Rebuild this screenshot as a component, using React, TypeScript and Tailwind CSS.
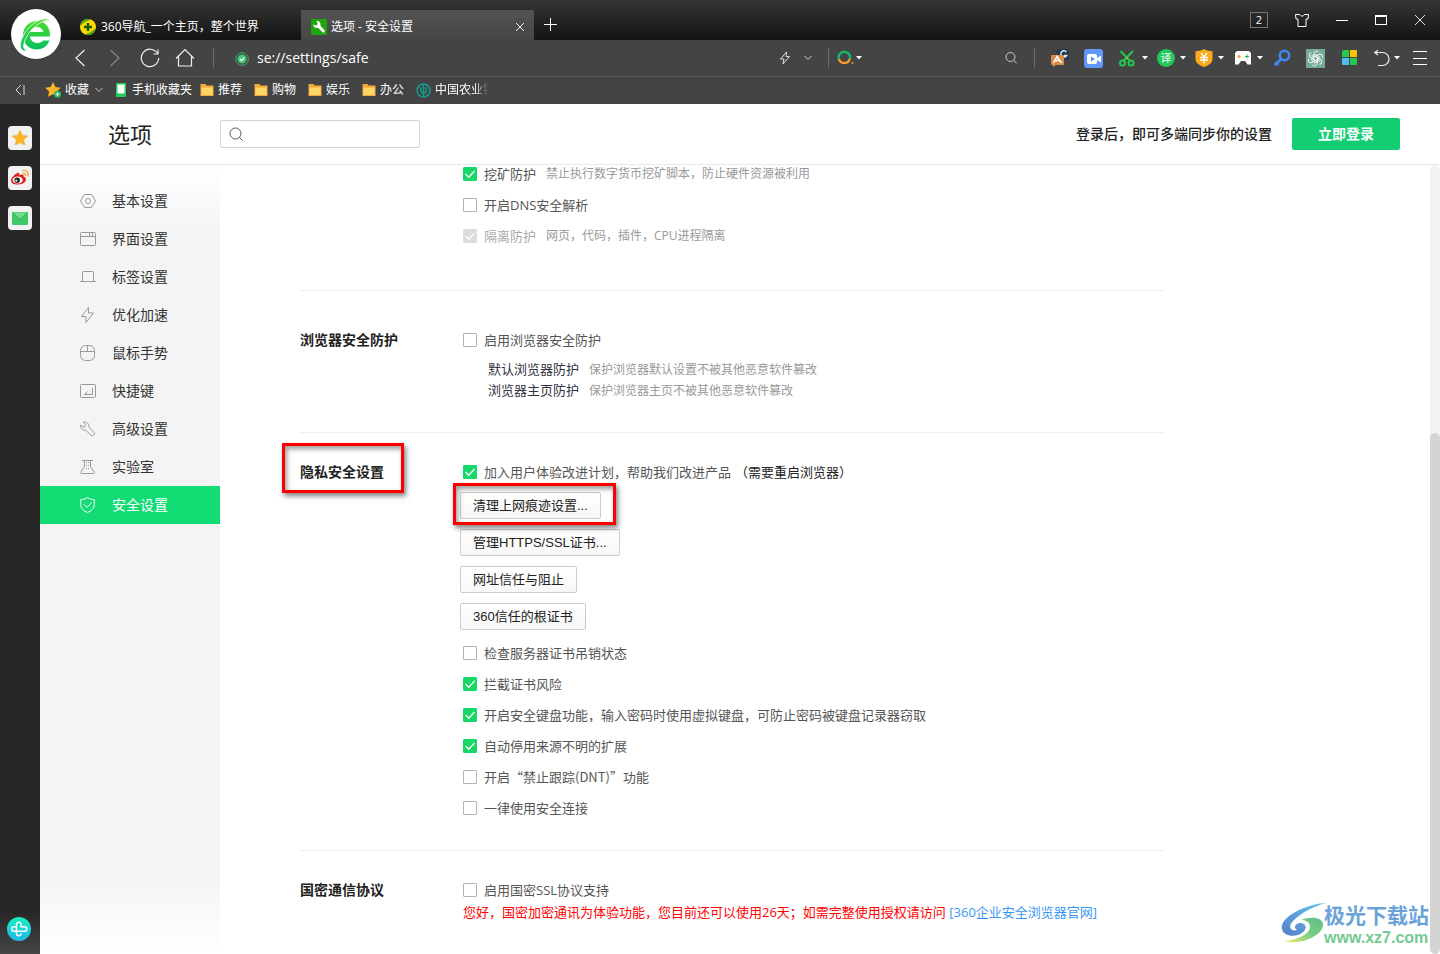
import { useState } from 'react'
import type { ReactNode } from 'react'

const folders = ['推荐', '购物', '娱乐', '办公']

const navItems: { label: string; icon: ReactNode }[] = [
  {
    label: '基本设置',
    icon: (
      <>
        <path d="M4.500 1.500h7l4 6.500-4 6.500h-7L.5 8z" />
        <circle cx="8" cy="8" r="2.500" />
      </>
    ),
  },
  {
    label: '界面设置',
    icon: (
      <>
        <rect x=".5" y="1.500" width="15" height="13" rx="1" />
        <path d="M.5 5.500h15M9.500 2v3M12.500 2v3" />
      </>
    ),
  },
  {
    label: '标签设置',
    icon: <path d="M0 12.500h16M2.500 12.500V3.500a1 1 0 0 1 1-1h9a1 1 0 0 1 1 1v9" />,
  },
  {
    label: '优化加速',
    icon: <path d="M8.500 .5 1.500 9.500h4.500v6l7.500-9.500H8.500z" />,
  },
  {
    label: '鼠标手势',
    icon: (
      <>
        <rect x=".5" y=".5" width="14" height="15" rx="5" />
        <path d="M.5 6.500h14M7.500 .5v6" />
      </>
    ),
  },
  {
    label: '快捷键',
    icon: (
      <>
        <rect x=".5" y="1.500" width="15" height="13" rx="1" />
        <path d="M12.500 5v6.500H4.500l3-3M4.500 11.500h3" />
      </>
    ),
  },
  {
    label: '高级设置',
    icon: (
      <path d="M3.200 1.300 5.600 3.700 5 5.600 3 6.100.8 3.900C.2 6.500 2 9.600 5.600 9.100l5.600 5.300c1.800 1.200 4.200-.9 3-2.800L9 6.300C9.700 3 6.400.2 3.200 1.300z" />
    ),
  },
  {
    label: '实验室',
    icon: (
      <>
        <path d="M2 1.500h11M4.500 1.500v6L.8 13c-.4.800 0 1.500 1 1.500h11.400c1 0 1.400-.7 1-1.500L10.500 7.500v-6" />
        <path d="M6.500 3v7M8.500 3v7" strokeDasharray="1 2" />
      </>
    ),
  },
  {
    label: '安全设置',
    icon: (
      <>
        <path d="M7.500 .6C5.500 2 3.200 2.600.7 2.700v5c0 3.600 2.800 6.300 6.800 7.700 4-1.400 6.800-4.100 6.800-7.700v-5C11.800 2.600 9.500 2 7.500.6z" />
        <path d="m4 7.500 3 3 4.500-5" />
      </>
    ),
  },
]

function Caret() {
  return (
    <svg width="6" height="4" viewBox="0 0 6 4" className="fill-white">
      <path d="M0 0h6L3 3.500z" />
    </svg>
  )
}

function Chevron() {
  return (
    <svg width="8" height="8" viewBox="0 0 8 8" fill="none" stroke="#ccc">
      <path d="m.5 2 3.500 3.500L7.500 2" />
    </svg>
  )
}

function Folder() {
  return (
    <svg width="14" height="14" viewBox="0 0 14 14">
      <path d="M.5 1h5l1 1.500h7v10.500H.5z" fill="#f5a93a" />
      <path d="M1.500 4.500h11V12h-11z" fill="#ffd766" />
    </svg>
  )
}

function TabBar() {
  return (
    <div className="flex h-10 items-end bg-linear-to-b from-[#363637] to-[#141415] pl-[67px]">
      <div className="flex h-[30px] w-[234px] items-center gap-1 pt-[3px] pl-3 text-xs text-white">
        <svg width="18" height="18" viewBox="0 0 18 18">
          <circle cx="9" cy="9" r="8" fill="#ffd900" />
          <path d="M1.200 8A8 8 0 0 1 13 2.100C9 2 5 4 1.200 8zM16.800 10A8 8 0 0 1 5 15.900c4 .1 8-1.900 11.800-5.900z" fill="#3aa815" />
          <path d="M9 5v8M5 9h8" stroke="#175b13" strokeWidth="2.500" />
        </svg>
        <span>360导航_一个主页，整个世界</span>
      </div>
      <div className="flex h-[30px] w-[233px] items-center bg-linear-to-b from-[#535354] to-[#464647] pt-[3px] pr-2 pl-[10px] text-xs text-white">
        <svg width="16" height="16" viewBox="0 0 16 16">
          <rect width="16" height="16" rx="1" fill="#1fa50e" />
          <path d="M8 7.500 12.300 12" stroke="#fff" strokeWidth="3" strokeLinecap="round" />
          <path d="M2.300 5.200 4.300 6.500 6.400 5.800 6.600 3.600 5 2c3-.4 5 1.500 4.500 4.500L7 9C4 9.200 2 7.800 2.300 5.200z" fill="#fff" />
        </svg>
        <span className="ml-1 flex-1">选项 - 安全设置</span>
        <button aria-label="关闭标签">
          <svg width="12" height="12" viewBox="0 0 12 12" stroke="#eee">
            <path d="m2 2 8 8M10 2l-8 8" />
          </svg>
        </button>
      </div>
      <button aria-label="新标签" className="flex h-[30px] w-8 items-center justify-center">
        <svg width="14" height="14" viewBox="0 0 14 14" stroke="#fff">
          <path d="M7.500 0v13M1 6.500h13" />
        </svg>
      </button>
      <div className="ml-auto flex h-10 items-center pr-[10px]">
        <button className="mr-6 flex h-4 w-[18px] items-center justify-center border border-[#777] text-[11px] text-white">2</button>
        <button aria-label="皮肤" className="mr-5 flex w-5 justify-center">
          <svg width="14" height="13" viewBox="0 0 14 13" fill="none" stroke="#fff">
            <path d="M.5.5h4c.5 2 4.500 2 5 0h4L13 5h-2v7.500H3V5H1z" />
          </svg>
        </button>
        <button aria-label="最小化" className="mr-[19px] flex w-5 justify-center">
          <svg width="12" height="12" viewBox="0 0 12 12" stroke="#fff"><path d="M0 6.500h12" /></svg>
        </button>
        <button aria-label="最大化" className="mr-[19px] flex w-5 justify-center">
          <svg width="12" height="12" viewBox="0 0 12 12" fill="none" stroke="#fff">
            <rect x=".5" y="1.500" width="11" height="9" />
            <path d="M0 2.500h12" />
          </svg>
        </button>
        <button aria-label="关闭" className="flex w-5 justify-center">
          <svg width="12" height="12" viewBox="0 0 12 12" stroke="#ddd"><path d="m1 1 10 10M11 1 1 11" /></svg>
        </button>
      </div>
    </div>
  )
}

function Toolbar() {
  return (
    <div className="flex h-9 items-center bg-[#444445] pr-[13px] pl-[70px]">
      <div className="flex items-center gap-[15px]">
        <button aria-label="后退" className="flex w-5 justify-center">
          <svg width="12" height="18" viewBox="0 0 12 18" fill="none" stroke="#eee" strokeWidth="1.200"><path d="M10.500 1 2 9l8.500 8" /></svg>
        </button>
        <button aria-label="前进" className="flex w-5 justify-center">
          <svg width="12" height="18" viewBox="0 0 12 18" fill="none" stroke="#888" strokeWidth="1.200"><path d="m1.500 1 8.500 8-8.500 8" /></svg>
        </button>
        <button aria-label="刷新" className="flex w-5 justify-center">
          <svg width="20" height="20" viewBox="0 0 20 20" fill="none" stroke="#eee" strokeWidth="1.200">
            <path d="M17.500 5.500A8.700 8.700 0 1 0 18.700 10M18 1.500v4.500h-4.500" />
          </svg>
        </button>
        <button aria-label="主页" className="flex w-5 justify-center">
          <svg width="20" height="20" viewBox="0 0 20 20" fill="none" stroke="#eee" strokeWidth="1.200">
            <path d="M1 10.500 10 1.500l9 9M3.500 8.500v9.500h13V8.500" />
          </svg>
        </button>
      </div>
      <span className="ml-[18px] h-5 w-px bg-[#6c6c6d]" />
      <svg width="14" height="16" viewBox="0 0 14 16" className="ml-[21px]" fill="none">
        <circle cx="7" cy="9" r="6.300" stroke="#3fb56c" />
        <circle cx="7" cy="9" r="4.500" fill="#45c877" />
        <path d="m4.800 9 1.700 1.700 2.800-3" stroke="#fff" strokeWidth="1.200" />
      </svg>
      <input
        aria-label="地址"
        defaultValue="se://settings/safe"
        className="ml-2 min-w-0 flex-1 bg-transparent text-sm leading-5 text-white outline-none"
      />
      <button aria-label="极速模式" className="flex items-center gap-[13px]">
        <svg width="12" height="14" viewBox="0 0 12 14" fill="none" stroke="#ddd">
          <path d="M7.500 1 1.500 8H5l-1 5 6.500-7.500H7z" />
        </svg>
        <Chevron />
      </button>
      <span className="ml-4 h-5 w-px bg-[#6c6c6d]" />
      <button aria-label="搜索引擎" className="ml-2 flex items-center gap-[2px]">
        <svg width="17" height="16" viewBox="0 0 17 16" fill="none" strokeWidth="2.500">
          <path d="M1.900 9A5.700 5.700 0 1 1 12.800 9" stroke="#12b767" />
          <path d="M1.900 9a5.700 5.700 0 0 0 10.900 0" stroke="#fb9b2c" />
          <circle cx="15.500" cy="13" r="1" fill="#fb9b2c" stroke="none" />
        </svg>
        <Caret />
      </button>
      <input aria-label="搜索" className="w-[142px] bg-transparent outline-none" />
      <button aria-label="搜索">
        <svg width="14" height="14" viewBox="0 0 14 14" fill="none" stroke="#ccc">
          <circle cx="6.500" cy="6" r="4.500" />
          <path d="m9.700 9.300 3 3" />
        </svg>
      </button>
      <span className="ml-4 h-5 w-px bg-[#6c6c6d]" />
      <button aria-label="翻译工具" className="ml-4">
        <svg width="18" height="18" viewBox="0 0 18 18">
          <rect x="6" width="12" height="11" rx="2" fill="#253852" />
          <path d="M15.500 3a3.200 3.200 0 1 0 .3 3.500H13" fill="none" stroke="#dfe7f2" strokeWidth="1.500" />
          <path d="M1 6h11a1 1 0 0 1 1 1v8a1 1 0 0 1-1 1H5l-3 2v-2H1a1 1 0 0 1-1-1V7a1 1 0 0 1 1-1z" fill="#d98d4b" />
          <path d="m2.500 14 3.500-6.500L10.500 14M4.500 11.500h4" fill="none" stroke="#fff" strokeWidth="1.500" />
        </svg>
      </button>
      <button aria-label="录屏" className="ml-[15px]">
        <svg width="19" height="19" viewBox="0 0 19 19">
          <rect width="19" height="19" rx="3" fill="#6396fb" />
          <rect x="3" y="5" width="10" height="10" rx="2" fill="#fff" />
          <path d="m13 9 4-2.500v7L13 11z" fill="#fff" />
          <path d="m7 7.500 4 2.500-4 2.500z" fill="#5b8cf5" />
        </svg>
      </button>
      <button aria-label="截图" className="ml-4 flex items-center gap-[7px]">
        <svg width="16" height="17" viewBox="0 0 16 17" fill="none" stroke="#1fc94c" strokeWidth="2">
          <path d="m1.500 1 9.500 10M14 1 4.500 11" />
          <circle cx="3.500" cy="13" r="2.500" />
          <circle cx="12" cy="13" r="2.500" />
          <circle cx="7.800" cy="8" r="1" fill="#e8a93c" stroke="none" />
        </svg>
        <Caret />
      </button>
      <button aria-label="网页翻译" className="ml-[9px] flex items-center gap-[5px]">
        <span className="flex size-[18px] items-center justify-center rounded-full bg-[#21c85b] text-[11px] leading-4 text-white">译</span>
        <Caret />
      </button>
      <button aria-label="网购先赔" className="ml-[9px] flex items-center gap-[5px]">
        <svg width="18" height="18" viewBox="0 0 18 18" fill="none" stroke="#fff" strokeWidth="1.300">
          <path d="M9 0c2 1.500 5 2 8.500 2v8c0 4-4 6.500-8.500 8C4.500 16.500.5 14 .5 10V2C4 2 7 1.500 9 0z" fill="#fbaa1c" stroke="none" />
          <path d="m6 4 3 4 3-4M5 8.500h8M5 11h8M9 8v6.500" />
        </svg>
        <Caret />
      </button>
      <button aria-label="游戏" className="ml-[10px] flex items-center gap-[5px]">
        <svg width="18" height="16" viewBox="0 0 18 16">
          <path d="M3 1h12l2 2v11.500h-3.500L11 11H7l-2.500 3.500H1V3z" fill="#fff" />
          <circle cx="5" cy="6.500" r="1.500" fill="#f1a028" />
          <path d="M13 4.500v4M11 6.500h4" stroke="#27b352" />
        </svg>
        <Caret />
      </button>
      <button aria-label="密码" className="ml-[10px]">
        <svg width="18" height="18" viewBox="0 0 18 18" fill="none" stroke="#4386f5">
          <circle cx="11.500" cy="6.500" r="4.700" strokeWidth="2.600" />
          <path d="M8.500 10 1.500 16M2.500 13l3 3" strokeWidth="2.600" />
        </svg>
      </button>
      <button aria-label="AI助手" className="ml-[15px]">
        <svg width="19" height="19" viewBox="0 0 19 19" fill="none" stroke="#fff" strokeWidth=".9">
          <rect width="19" height="19" fill="#74a99b" stroke="none" />
          {[0, 60, 120, 180, 240, 300].map(deg => (
            <path key={deg} transform={`rotate(${deg} 9.500 9.500)`} d="M7.700 8.500V4.700a2.800 2.800 0 0 1 5-1.500M7.700 8.500l3.500-2 3 1.700" />
          ))}
        </svg>
      </button>
      <button aria-label="应用" className="ml-[17px]">
        <svg width="16" height="16" viewBox="0 0 16 16">
          <path d="M0 2a2 2 0 0 1 2-2h5v7H0z" fill="#22c94a" />
          <path d="M8 0h6a1 1 0 0 1 1 1v6H8z" fill="#fdc204" />
          <path d="M0 8h7v7H1a1 1 0 0 1-1-1z" fill="#4cbcf3" />
          <path d="M8 8h7v6a1 1 0 0 1-1 1H8z" fill="#22c94a" />
        </svg>
      </button>
      <button aria-label="恢复" className="ml-4 flex items-center gap-1">
        <svg width="16" height="18" viewBox="0 0 16 18" fill="none" stroke="#eee" strokeWidth="1.200">
          <path d="M4 1.200.8 3.500 4 6M1 3.500h7.500a6.500 6.500 0 0 1 0 13H4" />
        </svg>
        <Caret />
      </button>
      <button aria-label="菜单" className="ml-[13px]">
        <svg width="14" height="14" viewBox="0 0 14 14" stroke="#fff"><path d="M0 .5h14M0 7.500h14M0 13.500h14" /></svg>
      </button>
    </div>
  )
}

function BookmarkBar() {
  return (
    <div className="flex h-7 items-center border-t border-[#5b5b5c] bg-[#434344] pb-px pl-[15px] text-xs text-white">
      <button aria-label="收起">
        <svg width="10" height="12" viewBox="0 0 10 12" fill="none" stroke="#ddd"><path d="M6 1 1 6l5 5M9 1v10" /></svg>
      </button>
      <button className="ml-5 flex items-center">
        <svg width="17" height="16" viewBox="0 0 17 16">
          <path d="m8 0 2.400 5 5.400.7-4 3.700 1 5.400L8 12.200l-4.900 2.600 1-5.400-4-3.700L5.600 5z" fill="#fcb62b" />
          <circle cx="12.500" cy="12.200" r="3.500" fill="#1fb955" />
          <path d="M12.500 10.200v4M10.500 12.200h4" stroke="#fff" />
        </svg>
        <span className="mr-[6px] ml-[3px]">收藏</span>
        <Chevron />
      </button>
      <button className="ml-[13px] flex items-center gap-[6px]">
        <svg width="10" height="14" viewBox="0 0 10 14">
          <rect width="10" height="14" rx="1" fill="#1fce54" />
          <path d="M1.500 1.500h7v9h-7z" fill="#fff" />
        </svg>
        手机收藏夹
      </button>
      <div className="ml-2 flex gap-3">
        {folders.map(name => (
          <button key={name} className="flex items-center gap-1">
            <Folder />
            {name}
          </button>
        ))}
      </div>
      <a href="#abchina" className="ml-3 flex items-center gap-1">
        <svg width="15" height="15" viewBox="0 0 15 15" fill="none" stroke="#159a8e">
          <circle cx="7.500" cy="7.500" r="6.500" strokeWidth="1.500" />
          <path d="M7.500 2v11M4.800 4v3.500a2.700 2.700 0 0 0 5.400 0V4" strokeWidth="1.500" />
        </svg>
        <span className="mask-r-from-65% mask-r-to-90% whitespace-nowrap">中国农业银</span>
      </a>
    </div>
  )
}

function Dock() {
  return (
    <aside className="flex w-10 shrink-0 flex-col items-center gap-4 bg-linear-to-b from-[#272728] from-95% to-[#454546] pt-[22px] pb-[13px]">
      <button aria-label="收藏" className="flex size-6 items-center justify-center rounded bg-[#f2f2f2]">
        <svg width="16" height="16" viewBox="0 0 16 16">
          <path d="m8 .5 2.300 4.900 5.200.7-3.800 3.600 1 5.300L8 12.400 3.300 15l1-5.300L.5 6.100l5.200-.7z" fill="#fdb824" stroke="#f09a25" strokeWidth=".6" />
        </svg>
      </button>
      <button aria-label="微博" className="flex size-6 items-center justify-center rounded bg-[#f2f2f2]">
        <svg width="20" height="18" viewBox="0 0 20 18" fill="none">
          <path d="M7.500 4C9 3.500 9.700 4.500 9.200 6c3-1.200 5-.5 4.300 1.600 5 2 2 8-5.500 8S-.5 11 3 7.500C4.500 5.800 6 4.500 7.500 4z" fill="#e02020" />
          <ellipse cx="7.700" cy="11" rx="5" ry="3.600" fill="#fff" />
          <circle cx="7.200" cy="11.300" r="2.700" fill="#222" />
          <circle cx="6.300" cy="11.700" r="1" fill="#fff" />
          <path d="M12.500 1.500c4-.8 6.500 2 5.500 6M13 4.300c1.800-.3 3 1 2.500 2.700" stroke="#f5a33b" strokeWidth="1.400" />
        </svg>
      </button>
      <button aria-label="邮箱" className="flex size-6 items-center justify-center rounded bg-[#f2f2f2]">
        <svg width="16" height="14" viewBox="0 0 16 14">
          <rect y="1" width="16" height="13" rx="1" fill="#3fca66" />
          <path d="m.5 1.500 7.500 7 7.500-7z" fill="#6fdd8c" />
          <path d="m.5 1.500 7.500 7 7.500-7" fill="none" stroke="#23a04a" strokeWidth=".8" />
        </svg>
      </button>
      <button aria-label="助手" className="mt-auto mr-[2px]">
        <svg width="24" height="24" viewBox="0 0 24 24" fill="none">
          <defs>
            <linearGradient id="dock" x2="0" y2="1">
              <stop stopColor="#18efc0" />
              <stop offset="1" stopColor="#1db8ec" />
            </linearGradient>
          </defs>
          <circle cx="12" cy="12" r="12" fill="url(#dock)" />
          <path d="M14 9V7a2.300 2.300 0 0 0-4.500 0v10a2.300 2.300 0 0 0 4.500 0M9.500 9.700H7a2.300 2.300 0 0 0 0 4.600h10.500a2.300 2.300 0 0 0 0-4.600H14V9" stroke="#fff" strokeWidth="1.500" strokeLinecap="round" />
        </svg>
      </button>
    </aside>
  )
}

interface CheckProps {
  label: ReactNode
  checked?: boolean
  disabled?: boolean
  note?: string
}

function Check({ label, checked, disabled, note }: CheckProps) {
  return (
    <div className="flex h-[18px] items-center text-[13px] leading-[18px]">
      <label className={disabled ? 'flex items-center gap-[7px] text-[#aaa]' : 'flex items-center gap-[7px] text-[#555]'}>
        <span className="grid size-[14px] shrink-0">
          <input
            type="checkbox"
            defaultChecked={checked}
            disabled={disabled}
            className="peer col-start-1 row-start-1 appearance-none rounded-[1px] border border-[#b4b4b4] bg-white checked:border-[#16d868] checked:bg-[#16d868] disabled:border-[#dcdcdc] disabled:bg-[#dcdcdc]"
          />
          <svg viewBox="0 0 14 14" className="pointer-events-none invisible col-start-1 row-start-1 size-[14px] peer-checked:visible" fill="none" stroke="#fff" strokeWidth="1.300">
            <path d="m2.500 7 3.300 3.200L11.500 4" />
          </svg>
        </span>
        <span>{label}</span>
      </label>
      {note && <span className="ml-[10px] text-xs leading-[18px] text-[#999]">{note}</span>}
    </div>
  )
}

function Section({ title, marked, children }: { title?: string; marked?: boolean; children: ReactNode }) {
  return (
    <section className="flex">
      <div className="flex w-[163px] shrink-0 items-start">
        {title && (
          <h2 className="relative text-sm leading-[18px] font-bold text-[#222]">
            {title}
            {marked && <span className="absolute -top-5 -right-5 -bottom-3 -left-[18px] border-3 border-[#fa0000] shadow-[2px_3px_5px_rgba(0,0,0,0.5),inset_2px_3px_5px_rgba(0,0,0,0.4)]" />}
          </h2>
        )}
      </div>
      <div className="min-w-0 flex-1">{children}</div>
    </section>
  )
}

function PlainButton({ children }: { children: ReactNode }) {
  return (
    <button className="h-[27px] rounded-[2px] border border-[#ccc] bg-linear-to-b from-white to-[#f7f7f7] px-3 font-[Liberation_Sans,Noto_Sans_CJK_SC,sans-serif] text-[13px] leading-5 text-[#222]">
      {children}
    </button>
  )
}

function Watermark() {
  return (
    <div className="pointer-events-none absolute right-[11px] bottom-[6px] flex items-end">
      <svg width="46" height="42" viewBox="0 0 46 42" className="mb-1">
        <defs>
          <linearGradient id="wave" x1="1" x2="0" y2="1">
            <stop stopColor="#5cc5ee" />
            <stop offset="1" stopColor="#5a7fc8" />
          </linearGradient>
          <linearGradient id="leaf" x1="1" x2="0" y2="1">
            <stop stopColor="#5cc08a" />
            <stop offset=".5" stopColor="#7ccb86" />
            <stop offset="1" stopColor="#eaf06c" />
          </linearGradient>
        </defs>
        <path d="M45 1C24 2-2 16 1 27c1 7 13 9 20 4 6-5 4-9-1-10-6 0-8 5-4 7-7 2-9-4-4-9C20 11 31 5 45 1z" fill="url(#wave)" />
        <path d="M20 18c10-4 21-3 22 4C43 32 22 44 3 39c13-1 26-7 26-14 0-5-4-7-9-7z" fill="url(#leaf)" />
      </svg>
      <div className="-ml-[3px] whitespace-nowrap">
        <p className="font-[Liberation_Sans,Noto_Sans_CJK_SC,sans-serif] text-[21px] leading-6 font-bold text-[#6ba3d9]">极光下载站</p>
        <p className="font-[Liberation_Sans,sans-serif] text-base leading-5 font-bold text-[#74cb92]">www.xz7.com</p>
      </div>
    </div>
  )
}

export default function App() {
  const [active, setActive] = useState('安全设置')

  return (
    <div className="relative flex h-screen flex-col overflow-hidden bg-white font-[Open_Sans,Noto_Sans_CJK_SC,sans-serif]">
      <TabBar />
      <Toolbar />
      <BookmarkBar />
      <button aria-label="360浏览器" className="absolute top-[9px] left-[11px] flex size-[50px] items-center justify-center rounded-full bg-white shadow">
        <svg width="36" height="38" viewBox="0 0 36 38" fill="none">
          <defs>
            <linearGradient id="brand" x2="0" y2="1">
              <stop stopColor="#4bdc2c" />
              <stop offset="1" stopColor="#06c060" />
            </linearGradient>
          </defs>
          <path d="M32 21.500H12c.5 4 3.500 6.500 7.500 6.500 2.500 0 4.500-1 5.500-2.500h6.500C29.500 31 25 34.500 19 34.500 11 34.500 5 28.500 5 20.500S11 6 19 6s13.500 6 13 15.500zM25.500 17c-1-3.500-3.500-5-6.500-5s-6 1.500-7 5z" fill="url(#brand)" />
          <path d="M32 7C31 2 23 3 15 9 6 16-1 30 4 35c1.500 1.500 4 1.200 6 .2-4 .5-5-3-4-7C8 20 15 12 22 8c4-2.500 8-3.500 10-1z" fill="url(#brand)" stroke="#fff" strokeWidth=".8" />
        </svg>
      </button>

      <div className="flex min-h-0 flex-1">
        <Dock />
        <div className="flex min-w-0 flex-1 flex-col">
          <header className="flex h-[61px] shrink-0 items-center border-b border-[#e8e8e8] pr-10 pl-[68px]">
            <h1 className="w-28 text-[22px] leading-8 text-[#222]">选项</h1>
            <label className="flex h-7 w-[200px] items-center gap-2 rounded-[2px] border border-[#d4d4d4] px-2">
              <svg width="14" height="14" viewBox="0 0 14 14" fill="none" stroke="#555" className="shrink-0">
                <circle cx="6.500" cy="6.500" r="5.500" />
                <path d="m10.500 10.500 3 3" />
              </svg>
              <input aria-label="搜索设置" className="min-w-0 flex-1 text-xs outline-none" />
            </label>
            <span className="ml-auto text-sm font-medium text-[#222]">登录后，即可多端同步你的设置</span>
            <button className="ml-5 h-8 w-[108px] rounded-[2px] bg-[#12cd72] text-sm font-bold text-white">立即登录</button>
          </header>

          <div className="flex min-h-0 flex-1">
            <nav className="w-[180px] shrink-0 bg-[linear-gradient(to_bottom,#fff,#f4f4f4_70px,#f4f4f4_calc(100%-80px),#fff)] pt-[17px]">
              <div className="flex flex-col">
                {navItems.map(({ label, icon }) => (
                  <a
                    key={label}
                    href={`#${label}`}
                    onClick={() => setActive(label)}
                    className={
                      active === label
                        ? 'flex h-[38px] items-center gap-4 bg-[#13dc74] pl-10 text-sm text-white'
                        : 'flex h-[38px] items-center gap-4 pl-10 text-sm text-[#333]'
                    }
                  >
                    <svg width="16" height="16" viewBox="0 0 16 16" fill="none" stroke={active === label ? '#fff' : '#999'}>
                      {icon}
                    </svg>
                    {label}
                  </a>
                ))}
              </div>
            </nav>

            <main className="min-w-0 flex-1 overflow-hidden pl-20">
              <div className="max-w-[864px] divide-y divide-[#eee]">
                <div className="pb-[45px]">
                  <Section>
                    <div className="flex flex-col gap-[13px]">
                      <Check label="挖矿防护" checked note="禁止执行数字货币挖矿脚本，防止硬件资源被利用" />
                      <Check label="开启DNS安全解析" />
                      <Check label="隔离防护" checked disabled note="网页，代码，插件，CPU进程隔离" />
                    </div>
                  </Section>
                </div>

                <div className="pt-10 pb-[31px]">
                  <Section title="浏览器安全防护">
                    <Check label="启用浏览器安全防护" />
                    <div className="mt-[10px] pl-[25px] text-[13px] leading-[21px] text-[#334]">
                      <p>默认浏览器防护<span className="ml-[10px] text-xs leading-[21px] text-[#999]">保护浏览器默认设置不被其他恶意软件篡改</span></p>
                      <p>浏览器主页防护<span className="ml-[10px] text-xs leading-[21px] text-[#999]">保护浏览器主页不被其他恶意软件篡改</span></p>
                    </div>
                  </Section>
                </div>

                <div className="pt-[30px] pb-[33px]">
                  <Section title="隐私安全设置" marked>
                    <Check label={<>加入用户体验改进计划，帮助我们改进产品<span className="ml-1 text-[#222]">（需要重启浏览器）</span></>} checked />
                    <div className="mt-[11px] -ml-[3px] flex flex-col items-start gap-[10px]">
                      <div className="relative flex">
                        <PlainButton>清理上网痕迹设置...</PlainButton>
                        <span className="pointer-events-none absolute -top-[9px] -right-[15px] -bottom-[6px] -left-[7px] border-3 border-[#fa0000] shadow-[2px_3px_5px_rgba(0,0,0,0.5),inset_2px_3px_5px_rgba(0,0,0,0.4)]" />
                      </div>
                      <PlainButton>管理HTTPS/SSL证书...</PlainButton>
                      <PlainButton>网址信任与阻止</PlainButton>
                      <PlainButton>360信任的根证书</PlainButton>
                    </div>
                    <div className="mt-[14px] flex flex-col gap-[13px]">
                      <Check label="检查服务器证书吊销状态" />
                      <Check label="拦截证书风险" checked />
                      <Check label="开启安全键盘功能，输入密码时使用虚拟键盘，可防止密码被键盘记录器窃取" checked />
                      <Check label="自动停用来源不明的扩展" checked />
                      <Check label={<span className="font-[Noto_Sans_CJK_SC,sans-serif]">开启“禁止跟踪(DNT)”功能</span>} />
                      <Check label="一律使用安全连接" />
                    </div>
                  </Section>
                </div>

                <div className="pt-[30px]">
                  <Section title="国密通信协议">
                    <Check label="启用国密SSL协议支持" />
                    <p className="mt-1 text-[13px] leading-[18px] text-[#f00]">
                      您好，国密加密通讯为体验功能，您目前还可以使用26天；如需完整使用授权请访问{' '}
                      <a href="#enterprise" className="text-[#3a97f5]">[360企业安全浏览器官网]</a>
                    </p>
                  </Section>
                </div>
              </div>
            </main>

            <div className="flex w-[10px] shrink-0 flex-col rounded-full bg-[#f3f3f3]">
              <div className="mt-auto h-[66%] rounded-full bg-[#d4d4d4]" />
            </div>
          </div>
        </div>
      </div>
      <Watermark />
    </div>
  )
}
